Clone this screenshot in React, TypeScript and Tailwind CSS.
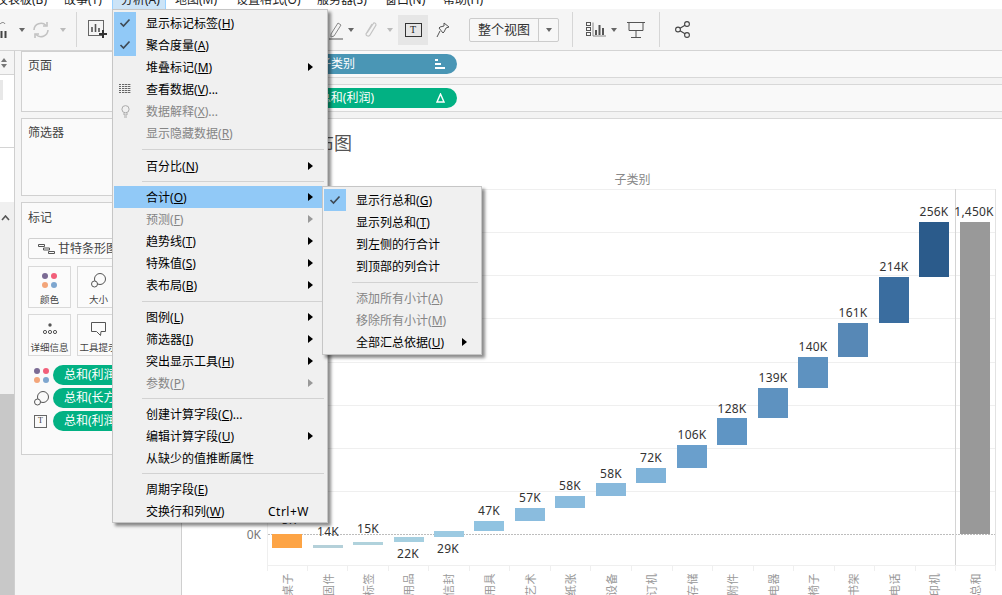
import React from "react";

const FONT = { fontFamily: '"Noto Sans","Noto Sans CJK SC",sans-serif' };

type Row =
  | { sep: number }
  | { t: string; k?: string; s?: string; off?: boolean; check?: boolean; arrow?: boolean; hi?: boolean; icon?: string; short?: string };

const mainRows: Row[] = [
  { t: "显示标记标签", k: "H", check: true },
  { t: "聚合度量", k: "A", check: true },
  { t: "堆叠标记", k: "M", arrow: true },
  { t: "查看数据", k: "V", s: "...", icon: "grid" },
  { t: "数据解释", k: "X", s: "...", off: true, icon: "bulb" },
  { t: "显示隐藏数据", k: "R", off: true },
  { sep: 11 },
  { t: "百分比", k: "N", arrow: true },
  { sep: 9 },
  { t: "合计", k: "O", arrow: true, hi: true },
  { t: "预测", k: "F", arrow: true, off: true },
  { t: "趋势线", k: "T", arrow: true },
  { t: "特殊值", k: "S", arrow: true },
  { t: "表布局", k: "B", arrow: true },
  { sep: 10 },
  { t: "图例", k: "L", arrow: true },
  { t: "筛选器", k: "I", arrow: true },
  { t: "突出显示工具", k: "H", arrow: true },
  { t: "参数", k: "P", arrow: true, off: true },
  { sep: 9 },
  { t: "创建计算字段", k: "C", s: "..." },
  { t: "编辑计算字段", k: "U", arrow: true },
  { t: "从缺少的值推断属性" },
  { sep: 9 },
  { t: "周期字段", k: "E" },
  { t: "交换行和列", k: "W", short: "Ctrl+W" },
];

const subRows: Row[] = [
  { t: "显示行总和", k: "G", check: true },
  { t: "显示列总和", k: "T" },
  { t: "到左侧的行合计" },
  { t: "到顶部的列合计" },
  { sep: 10 },
  { t: "添加所有小计", k: "A", off: true },
  { t: "移除所有小计", k: "M", off: true },
  { t: "全部汇总依据", k: "U", arrow: true },
];

function Check() {
  return (
    <svg width="12" height="10" viewBox="0 0 12 10" fill="none">
      <path d="M1.5 5l3 3 6-6.5" stroke="#3f4a55" strokeWidth="1.7" />
    </svg>
  );
}

function RowIcon({ name }: { name?: string }) {
  if (name === "grid")
    return (
      <svg width="13" height="11" viewBox="0 0 13 11" fill="#666">
        {[0, 2, 4, 6, 8].map((y) =>
          [0, 3, 6, 9].map((x) => <rect key={x + "-" + y} x={x} y={y} width={x === 0 ? 2 : 2.4} height="1" />)
        )}
      </svg>
    );
  if (name === "bulb")
    return (
      <svg width="9" height="13" viewBox="0 0 9 13" fill="none" stroke="#aaa">
        <circle cx="4.5" cy="4.2" r="3.6" />
        <path d="M3 8v2h3V8M3 12h3" />
      </svg>
    );
  return null;
}

function MenuRows({ rows }: { rows: Row[] }) {
  return (
    <>
      {rows.map((r, i) => {
        if ("sep" in r)
          return (
            <div key={i} className="flex items-center ml-[28px] mr-[2px]" style={{ height: r.sep }}>
              <div className="h-px w-full bg-[#d2d2d2]" />
            </div>
          );
        return (
          <div
            key={i}
            className={`flex items-center h-[22px] text-[12px] leading-[22px] ${r.hi ? "bg-[#91c9f7]" : ""} ${r.off ? "text-[#858585]" : "text-black"}`}
          >
            <div className={`flex items-center justify-center w-[22px] h-[22px] shrink-0 ${r.check ? "bg-[#91c9f7]" : ""}`}>
              {r.check ? <Check /> : <RowIcon name={r.icon} />}
            </div>
            <div className="ml-[10px] pt-[2px] flex-1 whitespace-nowrap">
              {r.t}
              {r.k ? (
                <>
                  (<span className="underline">{r.k}</span>)
                </>
              ) : null}
              {r.s}
            </div>
            {r.short ? <div className="mr-[17px] pt-[2px] tracking-[0.5px]">{r.short}</div> : null}
            {r.arrow ? (
              <svg width="5" height="8" viewBox="0 0 5 8" className="mr-[13px]">
                <path d="M0 0l5 4-5 4z" fill={r.off ? "#999" : "#000"} />
              </svg>
            ) : null}
          </div>
        );
      })}
    </>
  );
}

function Caret({ c = "#666" }: { c?: string }) {
  return (
    <svg width="6" height="4" viewBox="0 0 6 4">
      <path d="M0 0h6L3 4z" fill={c} />
    </svg>
  );
}

function Vsep() {
  return <div className="w-px h-[35px] bg-[#d6d6d6] shrink-0" />;
}

function Toolbar() {
  return (
    <div className="h-[42px] bg-[#f5f5f5] border-b border-[#d4d4d4] flex items-center shrink-0">
      <svg width="8" height="20" viewBox="0 0 8 20" className="ml-0 shrink-0" fill="none">
        <path d="M0 4c2-2 4-2 5 0" stroke="#777" />
        <rect x="0.5" y="11" width="2" height="7" fill="#444" />
        <rect x="4.5" y="11" width="2" height="7" fill="#444" />
      </svg>
      <div className="ml-[11px]"><Caret /></div>
      <svg width="18" height="16" viewBox="0 0 18 16" fill="none" stroke="#c2c2c2" strokeWidth="1.6" className="ml-[7px]">
        <path d="M2 8a7 7 0 0 1 12-4.5M16 8a7 7 0 0 1-12 4.5" />
        <path d="M15 0v4h-4M3 16v-4h4" />
      </svg>
      <div className="ml-[10px]"><Caret c="#bbb" /></div>
      <div className="ml-[10px]"><Vsep /></div>
      <svg width="20" height="19" viewBox="0 0 20 19" className="ml-[11px] shrink-0" fill="none">
        <rect x="0.5" y="0.5" width="15" height="15" stroke="#666" />
        <path d="M4 12V7M7.5 12V4M11 12V8" stroke="#555" strokeWidth="1.6" />
        <path d="M15 10v8M11 14h8" stroke="#333" strokeWidth="2" />
      </svg>
      <svg width="14" height="20" viewBox="0 0 14 20" className="ml-[221px] shrink-0" fill="none">
        <path d="M2 14L9 3l3 2-7 11-3 1z" stroke="#888" />
        <path d="M0 19h14" stroke="#555" />
      </svg>
      <div className="ml-[5px]"><Caret /></div>
      <svg width="13" height="18" viewBox="0 0 13 18" className="ml-[10px]" fill="none" stroke="#c4c4c4" strokeWidth="1.2">
        <path d="M3 12L9 3c1-2 3-1 3 1l-6 10c-1 2-4 1-4-1l6-10" />
      </svg>
      <div className="ml-[10px]"><Caret c="#bbb" /></div>
      <div className="ml-[5px] w-[30px] h-[30px] bg-[#e6e6e6] flex items-center justify-center shrink-0">
        <div className="w-[17px] h-[14px] border border-[#333] flex items-center justify-center text-[10px] leading-none text-[#222]" style={{ fontFamily: '"Liberation Serif",serif' }}>
          T
        </div>
      </div>
      <svg width="14" height="16" viewBox="0 0 14 16" className="ml-[8px] shrink-0" fill="none" stroke="#555">
        <path d="M8 1l5 4-3 1-2 4-1 1-4-5 1-1 4-1zM4 9l-3 6" />
      </svg>
      <div className="ml-[19px] w-[90px] h-[24px] border border-[#ccc] rounded-[2px] flex items-center shrink-0 bg-[#f7f7f7]">
        <div className="w-[69px] h-full flex items-center justify-center text-[13px] text-[#333] border-r border-[#ccc]">整个视图</div>
        <div className="flex-1 flex justify-center"><Caret /></div>
      </div>
      <div className="ml-[13px]"><Vsep /></div>
      <svg width="20" height="15" viewBox="0 0 20 15" className="ml-[13px] shrink-0" fill="none" stroke="#555">
        <rect x="0.5" y="0.5" width="4" height="3" />
        <rect x="0.5" y="5.5" width="4" height="3" />
        <rect x="0.5" y="10.5" width="4" height="3" />
        <path d="M7 .5V14h13" stroke="#888" />
        <path d="M10 13V8M13.5 13V3M17 13V6" strokeWidth="2" />
      </svg>
      <div className="ml-[5px]"><Caret /></div>
      <svg width="18" height="17" viewBox="0 0 18 17" className="ml-[10px] shrink-0" fill="none" stroke="#555">
        <path d="M0 1.5h18M2 1.500v8h14v-8M9 9.500V16M4 16.500h10" />
      </svg>
      <div className="ml-[14px]"><Vsep /></div>
      <svg width="15" height="17" viewBox="0 0 15 17" className="ml-[15px] shrink-0" fill="none" stroke="#444" strokeWidth="1.1">
        <circle cx="3" cy="8.5" r="2.4" />
        <circle cx="12" cy="3" r="2.4" />
        <circle cx="12" cy="14" r="2.4" />
        <path d="M5 7.2l5-3M5 9.8l5 3" />
      </svg>
    </div>
  );
}

function MenuBar() {
  const items: [string, string][] = [
    ["仪表板(B)", "w-[68px] -ml-[4px]"],
    ["故事(T)", "w-[48px]"],
    ["分析(A)", "w-[54px] pl-[8px] bg-[#cce4f7] border-x border-[#99d1ff]"],
    ["地图(M)", "w-[70px] pl-[9px]"],
    ["设置格式(O)", "w-[81px]"],
    ["服务器(S)", "w-[68px]"],
    ["窗口(N)", "w-[58px]"],
    ["帮助(H)", "w-[60px]"],
  ];
  return (
    <div className="h-[9px] bg-white overflow-hidden flex shrink-0 text-[12px] text-[#222]">
      {items.map(([t, c]) => (
        <div key={t} className={`h-[9px] shrink-0 whitespace-nowrap overflow-hidden ${c}`}>
          <div className="-mt-[11px] leading-[22px]">{t}</div>
        </div>
      ))}
    </div>
  );
}

function Pill({ label }: { label: string }) {
  return (
    <div className="h-[20px] w-[140px] rounded-full bg-[#02b183] text-white text-[12px] leading-[20px] pl-[11px] whitespace-nowrap">{label}</div>
  );
}

function MarkBtn({ label, children }: { label: string; children: React.ReactNode }) {
  return (
    <div className="w-[43px] h-[42px] border border-[#d9d9d9] bg-[#fbfbfb] flex flex-col items-center shrink-0">
      <div className="h-[27px] flex items-center justify-center">{children}</div>
      <div className="text-[9.5px] leading-[12px] text-[#444] whitespace-nowrap">{label}</div>
    </div>
  );
}

function Dots() {
  return (
    <svg width="15" height="15" viewBox="0 0 15 15">
      <circle cx="3" cy="3" r="3" fill="#7b6b94" />
      <circle cx="12" cy="3" r="3" fill="#f25f7a" />
      <circle cx="3" cy="12" r="3" fill="#f3a57a" />
      <circle cx="12" cy="12" r="3" fill="#7ea6cf" />
    </svg>
  );
}

function SizeIcon() {
  return (
    <svg width="15" height="15" viewBox="0 0 15 15" fill="none" stroke="#555">
      <circle cx="9" cy="6" r="5.5" />
      <circle cx="3.5" cy="11" r="3" fill="#fbfbfb" />
    </svg>
  );
}

function TBox() {
  return (
    <div className="w-[13px] h-[13px] border border-[#666] flex items-center justify-center text-[8px] leading-none text-[#333]" style={{ fontFamily: '"Liberation Serif",serif' }}>
      T
    </div>
  );
}

function LeftPane() {
  return (
    <div className="w-[15px] shrink-0 border-r border-[#cfcfcf] flex flex-col">
      <div className="h-[24px] bg-[#f5f5f5] border-b border-[#d4d4d4] flex items-center pl-[1px]">
        <svg width="6" height="10" viewBox="0 0 6 10"><path d="M0 4l3-4 3 4zM0 6h6l-3 4z" fill="#777" /></svg>
      </div>
      <div className="h-[73px] bg-white border-b border-[#d4d4d4] pt-[5px]">
        <div className="w-[3px] h-[20px] bg-[#e8e8e8]" />
      </div>
      <div className="h-[54px] bg-white" />
      <div className="h-[192px] bg-[#f0f0f0] pt-[13px] pl-[1px]">
        <svg width="9" height="6" viewBox="0 0 9 6" fill="none" stroke="#555" strokeWidth="1.6"><path d="M1 5l3.5-4L8 5" /></svg>
      </div>
      <div className="flex-1 bg-[#c8c8c8]" />
    </div>
  );
}

function CardsCol() {
  return (
    <div className="w-[167px] shrink-0 bg-[#f5f5f5] border-r border-[#cfcfcf] pl-[6px] pr-[4px] flex flex-col gap-[6px] text-[12px] text-[#444]">
      <div className="h-[61px] border border-[#d0d0d0] bg-[#fafafa] pl-[6px] pt-[5px] leading-[18px]">页面</div>
      <div className="h-[78px] border border-[#d0d0d0] bg-[#fafafa] pl-[6px] pt-[5px] leading-[18px]">筛选器</div>
      <div className="h-[253px] border border-[#d0d0d0] bg-[#fafafa] pl-[6px] pt-[6px] leading-[18px]">
        <div>标记</div>
        <div className="mt-[11px] h-[21px] w-[130px] border border-[#d0d0d0] rounded-[2px] bg-[#fbfbfb] flex items-center pl-[9px] whitespace-nowrap">
          <svg width="17" height="10" viewBox="0 0 17 10" fill="none" stroke="#555">
            <path d="M.5.5h6v2h-6zM5.5 4h6v2h-6zM10.5 7.500h6v2h-6z" />
          </svg>
          <span className="ml-[3px] text-[12px]">甘特条形图</span>
        </div>
        <div className="mt-[7px] flex gap-[6px]">
          <MarkBtn label="颜色"><Dots /></MarkBtn>
          <MarkBtn label="大小"><SizeIcon /></MarkBtn>
        </div>
        <div className="mt-[6px] flex gap-[6px]">
          <MarkBtn label="详细信息">
            <svg width="14" height="11" viewBox="0 0 14 11" fill="none" stroke="#555">
              <circle cx="7" cy="2" r="1.700" fill="#555" stroke="none" />
              <circle cx="2" cy="9" r="1.600" />
              <circle cx="7" cy="9" r="1.600" />
              <circle cx="12" cy="9" r="1.600" />
            </svg>
          </MarkBtn>
          <MarkBtn label="工具提示">
            <svg width="15" height="14" viewBox="0 0 15 14" fill="none" stroke="#555">
              <path d="M.5.5h14v9H10l-.5 4-4-4h-5z" />
            </svg>
          </MarkBtn>
        </div>
        <div className="mt-[9px] flex flex-col gap-[3px]">
          <div className="flex items-center">
            <div className="w-[25px] pl-[6px] shrink-0"><Dots /></div>
            <Pill label="总和(利润)" />
          </div>
          <div className="flex items-center">
            <div className="w-[25px] pl-[6px] shrink-0"><SizeIcon /></div>
            <Pill label="总和(长方形)" />
          </div>
          <div className="flex items-center">
            <div className="w-[25px] pl-[6px] shrink-0"><TBox /></div>
            <Pill label="总和(利润)" />
          </div>
        </div>
      </div>
    </div>
  );
}

const bars: [number, number, number, string, string, number, number][] = [
  [272, 534, 548, "#fda445", "-5K", 287, 524],
  [313, 545, 548, "#b4d0d9", "14K", 328, 536],
  [353, 542, 545, "#b0d2dc", "15K", 368, 533],
  [394, 537, 542, "#a5cfe0", "22K", 408, 558],
  [434, 531, 537, "#9ccae2", "29K", 448, 553],
  [474, 521, 531, "#90c3e1", "47K", 489, 515],
  [515, 508, 521, "#8abcde", "57K", 530, 502],
  [555, 496, 508, "#8abcde", "58K", 570, 490],
  [596, 483, 496, "#88b9dc", "58K", 611, 478],
  [636, 468, 483, "#7fb3d9", "72K", 651, 462],
  [677, 445, 468, "#6a9fcc", "106K", 692, 439],
  [717, 418, 445, "#5f95c4", "128K", 732, 413],
  [758, 388, 418, "#5e92c0", "139K", 773, 382],
  [798, 357, 388, "#5e92c0", "140K", 813, 351],
  [838, 323, 357, "#5788b6", "161K", 853, 317],
  [879, 277, 323, "#3a6d9f", "214K", 894, 271],
  [919, 222, 277, "#2b5b8b", "256K", 934, 216],
  [960, 222, 534, "#999999", "1,450K", 974, 216],
];

const cats: [string, number][] = [
  ["桌子", 287], ["固件", 328], ["标签", 368], ["用品", 408], ["信封", 448], ["用具", 489], ["艺术", 530],
  ["纸张", 570], ["设备", 611], ["订机", 651], ["存储", 692], ["附件", 732], ["电器", 773], ["椅子", 813],
  ["书架", 853], ["电话", 894], ["印机", 934], ["总和", 975],
];

const ticks = [267, 307, 347, 388, 428, 469, 509, 550, 590, 631, 672, 712, 753, 793, 834, 874, 915, 955, 995];

function Chart() {
  return (
    <svg viewBox="182 119 820 476" width="820" height="476" className="block" style={FONT}>
      <rect x="182" y="119" width="820" height="476" fill="#fff" />
      <text x="352" y="150" textAnchor="end" fontSize="18" fill="#555">瀑布图</text>
      <text x="632.500" y="184" textAnchor="middle" fontSize="12" fill="#888">子类别</text>
      {[189, 232, 275, 318, 362, 405, 448, 491, 565].map((y) => (
        <line key={y} x1="268" x2="996" y1={y + 0.5} y2={y + 0.5} stroke="#efefef" />
      ))}
      <line x1="268" x2="996" y1="534.500" y2="534.500" stroke="#bdbdbd" strokeDasharray="2 1" />
      <line x1="267.500" x2="267.500" y1="189" y2="571" stroke="#efefef" />
      <line x1="955.500" x2="955.500" y1="189" y2="565" stroke="#d4d4d4" />
      <line x1="995.500" x2="995.500" y1="189" y2="565" stroke="#e2e2e2" />
      {ticks.map((x) => (
        <line key={x} x1={x + 0.5} x2={x + 0.5} y1="565" y2="571" stroke="#efefef" />
      ))}
      <text x="261" y="539" textAnchor="end" fontSize="12" fill="#777">0K</text>
      {bars.map(([x, y1, y2, c]) => (
        <rect key={x} x={x} y={y1} width="30" height={y2 - y1} fill={c} />
      ))}
      {bars.map(([x, , , , l, lx, ly]) => (
        <text key={x} x={lx} y={ly} textAnchor="middle" fontSize="12" fill="#333" letterSpacing="0.2">{l}</text>
      ))}
      {cats.map(([t, x]) => (
        <text key={t} transform={`translate(${x + 5},573) rotate(-90)`} textAnchor="end" fontSize="11" fill="#999" letterSpacing="0.500">{t}</text>
      ))}
    </svg>
  );
}

function ViewCol() {
  return (
    <div className="flex-1 min-w-0 flex flex-col">
      <div className="h-[27px] bg-[#f9f9f9] border-b border-[#d8d8d8] pt-[3px] shrink-0">
        <div className="ml-[72px] w-[203px] h-[20px] rounded-r-full bg-[#4a96b5] flex items-center justify-end pr-[12px] text-white text-[12px]">
          <span className="mr-[80px]">子类别</span>
          <svg width="10" height="10" viewBox="0 0 10 10" fill="#fff"><rect width="3" height="2" /><rect y="4" width="6" height="2" /><rect y="8" width="10" height="2" /></svg>
        </div>
      </div>
      <div className="h-[6px] bg-[#f3f3f3] shrink-0" />
      <div className="h-[28px] bg-[#f9f9f9] border-y border-[#d8d8d8] pt-[3px] shrink-0">
        <div className="ml-[72px] w-[203px] h-[20px] rounded-r-full bg-[#02b183] flex items-center justify-end pr-[12px] text-white text-[12px]">
          <span className="mr-[62px]">总和(利润)</span>
          <svg width="9" height="10" viewBox="0 0 9 10" fill="none" stroke="#fff" strokeWidth="1.400"><path d="M4.500 1L8 9H1z" /></svg>
        </div>
      </div>
      <div className="h-[7px] bg-[#f3f3f3] border-b border-[#d8d8d8] shrink-0" />
      <div className="flex-1 min-h-0 overflow-hidden bg-white"><Chart /></div>
    </div>
  );
}

export default function App() {
  return (
    <div className="relative w-[1002px] h-[595px] overflow-hidden bg-white flex flex-col" style={FONT}>
      <MenuBar />
      <Toolbar />
      <div className="flex flex-1 min-h-0">
        <LeftPane />
        <CardsCol />
        <ViewCol />
      </div>
      <div className="absolute left-[112px] top-[9px] w-[216px] bg-[#f0f0f0] border border-[#c6c6c6] pt-[2px] px-px shadow-[3px_3px_3px_rgba(0,0,0,0.45)] h-[514px]">
        <MenuRows rows={mainRows} />
      </div>
      <div className="absolute left-[322px] top-[186px] w-[160px] h-[169px] bg-[#f0f0f0] border border-[#c6c6c6] pt-[2px] px-px shadow-[3px_3px_3px_rgba(0,0,0,0.45)]">
        <MenuRows rows={subRows} />
      </div>
    </div>
  );
}
